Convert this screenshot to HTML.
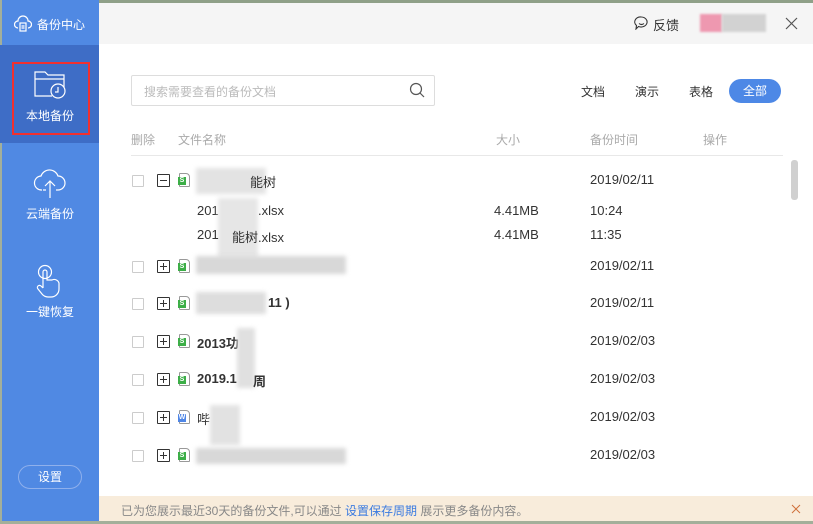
<!DOCTYPE html>
<html><head><meta charset="utf-8"><style>
*{margin:0;padding:0;box-sizing:border-box}
body{width:813px;height:524px;overflow:hidden;background:#fff;font-family:"Liberation Sans","Noto Sans CJK SC",sans-serif;position:relative;font-size:12px;color:#333}
.a{position:absolute}
.r{font-size:13px}
.side{left:0;top:0;width:99px;height:524px;background:#5089e3}
.t{color:#fff;font-size:12px}
.cb{width:12px;height:12px;border:1px solid #ccc;border-radius:1px;background:#fff}
.ex{width:13px;height:13px;border:1px solid #333;border-radius:1px}
.ex:before{content:"";position:absolute;left:2px;top:5px;width:7px;height:1px;background:#333}
.ex.p:after{content:"";position:absolute;left:5px;top:2px;width:1px;height:7px;background:#333}
.fi{width:11px;height:14px;border:1px solid #999;border-radius:1px 4px 1px 1px;background:#fff}
.fi i{position:absolute;left:-2px;top:3px;width:8px;height:8px;background:#3cae47;color:#fff;font-size:7px;font-style:normal;line-height:8px;text-align:center;font-weight:bold}
.bl{background:#d8d8d8;filter:blur(2px)}
.g{color:#aaa}
</style></head><body>
<div class="a" style="left:0;top:0;width:813px;height:3px;background:#8fa088"></div>
<div class="a" style="left:99px;top:3px;width:714px;height:41px;background:#f5f5f5"></div>
<div class="a side"></div>
<div class="a" style="left:0;top:0;width:2px;height:524px;background:#a3af9a"></div>
<div class="a" style="left:0;top:45px;width:99px;height:98px;background:#3e6dc6"></div>
<svg class="a" style="left:14px;top:15px" width="18" height="18" viewBox="0 0 18 18" fill="none" stroke="#fff" stroke-width="1.2"><path d="M4 13a3.5 3.5 0 0 1 0-7 5 5 0 0 1 10 0 3.5 3.5 0 0 1 0 7"/><rect x="6" y="8" width="6" height="8"/><path d="M7.5 11h3M7.5 13h3"/></svg>
<div class="a t" style="left:37px;top:16px">备份中心</div>
<div class="a" style="left:12px;top:62px;width:78px;height:73px;border:2px solid #f2302e"></div>
<svg class="a" style="left:34px;top:71px" width="34" height="32" viewBox="0 0 34 32" fill="none" stroke="#fff" stroke-width="1.2"><path d="M18 25H1V1h10l3 3h16v12"/><path d="M1 8h29"/><circle cx="24" cy="20" r="7"/><path d="M24 16v5h-3"/></svg>
<div class="a t" style="left:26px;top:107px">本地备份</div>
<svg class="a" style="left:33px;top:167px" width="34" height="32" viewBox="0 0 34 32" fill="none" stroke="#fff" stroke-width="1.2"><path d="M9 23a7 7 0 0 1-1-14 9 9 0 0 1 17 0 7 7 0 0 1 0 14h-2M13 23h-3"/><path d="M17 31V14M12 19l5-5 5 5"/></svg>
<div class="a t" style="left:26px;top:205px">云端备份</div>
<svg class="a" style="left:35px;top:264px" width="30" height="36" viewBox="0 0 30 36" fill="none" stroke="#fff" stroke-width="1.2"><circle cx="10" cy="8" r="6.5"/><path d="M8 24V8a2 2 0 0 1 4 0v8h5a5 5 0 0 1 7 3v6a8 8 0 0 1-8 8h-3a8 8 0 0 1-6-3l-4-5a2 2 0 0 1 3-3l2 2"/></svg>
<div class="a t" style="left:26px;top:303px">一键恢复</div>
<div class="a" style="left:18px;top:465px;width:64px;height:24px;border:1px solid #8fb0ec;border-radius:12px;color:#fff;text-align:center;line-height:22px">设置</div>

<svg class="a" style="left:634px;top:16px" width="15" height="14" viewBox="0 0 15 14" fill="none" stroke="#333" stroke-width="1.1"><path d="M7.5 1a6 5 0 1 1-3 9.5L2 13l.5-3.5A6 5 0 0 1 7.5 1z"/><path d="M5 7.5q2.5 2 5 0"/></svg>
<div class="a" style="left:653px;top:15px;font-size:13px">反馈</div>
<div class="a" style="left:700px;top:14px;width:22px;height:18px;background:#ee98b0;filter:blur(1px)"></div>
<div class="a" style="left:722px;top:14px;width:44px;height:18px;background:#d2d2d2;filter:blur(1px)"></div>
<svg class="a" style="left:785px;top:17px" width="13" height="13" stroke="#555" stroke-width="1.2"><path d="M1 1l11 11M12 1L1 12"/></svg>

<div class="a" style="left:131px;top:75px;width:304px;height:31px;border:1px solid #ddd;border-radius:2px"></div>
<div class="a g" style="left:144px;top:83px;font-size:12px;color:#bbb">搜索需要查看的备份文档</div>
<svg class="a" style="left:409px;top:82px" width="16" height="16" fill="none" stroke="#555" stroke-width="1.2"><circle cx="7" cy="7" r="5.5"/><path d="M11 11l4 4"/></svg>
<div class="a" style="left:581px;top:83px">文档</div>
<div class="a" style="left:635px;top:83px">演示</div>
<div class="a" style="left:689px;top:83px">表格</div>
<div class="a" style="left:729px;top:79px;width:52px;height:24px;background:#4d88e6;border-radius:12px;color:#fff;text-align:center;line-height:24px">全部</div>

<div class="a g" style="left:131px;top:131px">删除</div>
<div class="a g" style="left:178px;top:131px">文件名称</div>
<div class="a g" style="left:496px;top:131px">大小</div>
<div class="a g" style="left:590px;top:131px">备份时间</div>
<div class="a g" style="left:703px;top:131px">操作</div>
<div class="a" style="left:131px;top:155px;width:652px;height:1px;background:#e8e8e8"></div>
<div class="a" style="left:791px;top:160px;width:7px;height:40px;background:#d0d0d0;border-radius:3px"></div>

<div class="a cb" style="left:132px;top:175px"></div><div class="a ex" style="left:157px;top:174px"></div><div class="a fi" style="left:179px;top:173px"><i>S</i></div>
<div class="a bl" style="left:196px;top:168px;width:70px;height:26px;background:#e3e3e3"></div><div class="a r" style="left:250px;top:172px">能树</div>
<div class="a r" style="left:590px;top:172px">2019/02/11</div>
<div class="a r" style="left:197px;top:203px">201</div><div class="a bl" style="left:218px;top:198px;width:40px;height:60px;background:#e6e6e6"></div><div class="a r" style="left:258px;top:203px">.xlsx</div><div class="a r" style="left:494px;top:203px">4.41MB</div><div class="a r" style="left:590px;top:203px">10:24</div>
<div class="a r" style="left:197px;top:227px">201</div><div class="a r" style="left:232px;top:227px">能树.xlsx</div><div class="a r" style="left:494px;top:227px">4.41MB</div><div class="a r" style="left:590px;top:227px">11:35</div>

<div class="a cb" style="left:132px;top:261px"></div><div class="a ex p" style="left:157px;top:260px"></div><div class="a fi" style="left:179px;top:259px"><i>S</i></div>
<div class="a bl" style="left:196px;top:256px;width:150px;height:18px"></div><div class="a r" style="left:590px;top:258px">2019/02/11</div>
<div class="a cb" style="left:132px;top:298px"></div><div class="a ex p" style="left:157px;top:297px"></div><div class="a fi" style="left:179px;top:296px"><i>S</i></div>
<div class="a bl" style="left:196px;top:292px;width:70px;height:22px;background:#ddd"></div><div class="a r" style="left:268px;top:295px;font-weight:bold">11 )</div><div class="a r" style="left:590px;top:295px">2019/02/11</div>
<div class="a cb" style="left:132px;top:336px"></div><div class="a ex p" style="left:157px;top:335px"></div><div class="a fi" style="left:179px;top:334px"><i>S</i></div>
<div class="a r" style="left:197px;top:333px;font-weight:bold">2013功</div><div class="a bl" style="left:237px;top:328px;width:18px;height:60px;background:#e0e0e0"></div><div class="a r" style="left:590px;top:333px">2019/02/03</div>
<div class="a cb" style="left:132px;top:374px"></div><div class="a ex p" style="left:157px;top:373px"></div><div class="a fi" style="left:179px;top:372px"><i>S</i></div>
<div class="a r" style="left:197px;top:371px;font-weight:bold">2019.1</div><div class="a r" style="left:253px;top:371px;font-weight:bold">周</div><div class="a r" style="left:590px;top:371px">2019/02/03</div>
<div class="a cb" style="left:132px;top:412px"></div><div class="a ex p" style="left:157px;top:411px"></div><div class="a fi" style="left:179px;top:410px"><i style="background:#4f86e6">W</i></div>
<div class="a r" style="left:197px;top:409px">哔</div><div class="a bl" style="left:210px;top:405px;width:30px;height:40px;background:#e2e2e2"></div><div class="a r" style="left:590px;top:409px">2019/02/03</div>
<div class="a cb" style="left:132px;top:450px"></div><div class="a ex p" style="left:157px;top:449px"></div><div class="a fi" style="left:179px;top:448px"><i>S</i></div>
<div class="a bl" style="left:196px;top:448px;width:150px;height:16px"></div><div class="a r" style="left:590px;top:447px">2019/02/03</div>

<div class="a" style="left:99px;top:496px;width:714px;height:26px;background:#f8ecdb"></div>
<div class="a" style="left:121px;top:502px;color:#888">已为您展示最近30天的备份文件,可以通过 <span style="color:#3b7be0">设置保存周期</span> 展示更多备份内容。</div>
<svg class="a" style="left:791px;top:504px" width="10" height="10" stroke="#d0703a" stroke-width="1"><path d="M1 1l8 8M9 1L1 9"/></svg>
<div class="a" style="left:0;top:521px;width:813px;height:3px;background:#a3af9a"></div>
</body></html>
